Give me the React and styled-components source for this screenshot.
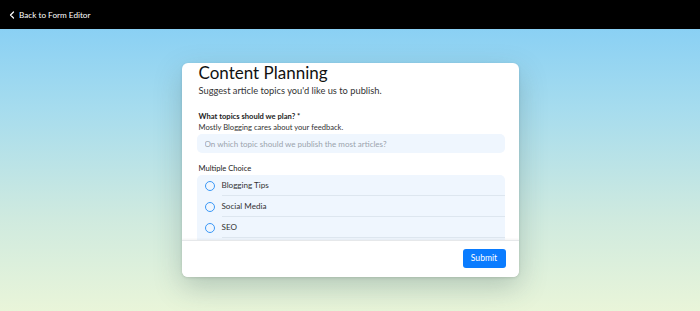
import React from 'react';
import styled, { createGlobalStyle } from 'styled-components';

const GlobalStyle = createGlobalStyle`
  html, body {
    margin: 0;
    padding: 0;
  }
  body {
    font-family: Lato, "Liberation Sans", sans-serif;
    color: #1f2328;
  }
  * { box-sizing: border-box; }
`;

const Page = styled.div`
  width: 100%;
  min-height: 311px;
  display: flex;
  flex-direction: column;
  background: linear-gradient(180deg, #80ccf6 0%, #a6dcee 35%, #cfeadf 70%, #e9f5d9 100%);
`;

const TopBar = styled.header`
  height: 29px;
  background: #000;
  display: flex;
  align-items: center;
  padding-left: 8px;
  gap: 3px;
  color: #fff;
  font-size: 8.2px;
`;

const Main = styled.main`
  flex: 1;
  display: flex;
  justify-content: center;
  padding-top: 34px;
  padding-bottom: 34px;
`;

const Card = styled.section`
  width: 337px;
  height: 214px;
  background: #fff;
  border-radius: 6px;
  box-shadow: 0 10px 28px rgba(60, 90, 90, 0.28), 0 1px 3px rgba(0, 0, 0, 0.12);
  display: flex;
  flex-direction: column;
  overflow: hidden;
`;

const Body = styled.div`
  flex: 1;
  overflow: hidden;
  padding: 0 14px 0 15px;
`;

const Title = styled.h1`
  margin: 0 0 0 2px;
  font-size: 17px;
  line-height: 20px;
  font-weight: 400;
  color: #111;
`;

const Subtitle = styled.p`
  margin: 1px 0 12.5px 2px;
  font-size: 9.3px;
  line-height: 14px;
  color: #333;
`;

const Label = styled.div`
  margin-left: 2px;
  font-size: 7.6px;
  line-height: 11px;
  font-weight: ${(p) => (p.$bold ? 700 : 400)};
  color: #222;
`;

const Help = styled.div`
  margin: 0 0 1.5px 2px;
  font-size: 7.6px;
  line-height: 11px;
  color: #333;
`;

const Input = styled.input`
  display: block;
  width: 100%;
  height: 19px;
  margin: 0 0 9.5px;
  border: none;
  border-radius: 5px;
  background: #eff6fe;
  padding: 0 8px;
  font-family: inherit;
  font-size: 8px;
  color: #333;
  outline: none;

  &::placeholder {
    color: #9aa3ad;
  }
`;

const Options = styled.div`
  margin-top: 1.5px;
  padding-bottom: 10px;
  background: #eff6fe;
  border-radius: 5px;
`;

const Option = styled.label`
  height: 21px;
  display: flex;
  align-items: center;
  padding-left: 8px;
  gap: 7px;
  cursor: pointer;
`;

const Radio = styled.span`
  width: 10px;
  height: 10px;
  border-radius: 50%;
  border: 1.2px solid #3a98f7;
  flex-shrink: 0;
`;

const OptionText = styled.span`
  flex: 1;
  height: 100%;
  display: flex;
  align-items: center;
  font-size: 8.1px;
  color: #333;
  border-bottom: 1px solid #dde6ef;
`;

const Footer = styled.footer`
  height: 37px;
  display: flex;
  align-items: center;
  justify-content: flex-end;
  padding: 0 13px 2px 0;
  border-top: 1px solid #e6e8ea;
  box-shadow: 0 -1px 2px rgba(0, 0, 0, 0.05);
  position: relative;
  background: #fff;
`;

const SubmitButton = styled.button`
  width: 43px;
  height: 19px;
  border: none;
  border-radius: 3px;
  background: #0a7cff;
  color: #fff;
  font-family: inherit;
  font-size: 8.6px;
  cursor: pointer;
`;

const choices = ['Blogging Tips', 'Social Media', 'SEO'];

export default function App() {
  return (
    <>
      <GlobalStyle />
      <Page>
        <TopBar>
          <svg width="8" height="8" viewBox="0 0 8 8" fill="none">
            <path d="M5.5 1L2.5 4l3 3" stroke="#fff" strokeWidth="1.2" strokeLinecap="round" strokeLinejoin="round" />
          </svg>
          <span>Back to Form Editor</span>
        </TopBar>
        <Main>
          <Card>
            <Body>
              <Title>Content Planning</Title>
              <Subtitle>Suggest article topics you'd like us to publish.</Subtitle>
              <Label $bold>What topics should we plan? *</Label>
              <Help>Mostly Blogging cares about your feedback.</Help>
              <Input placeholder="On which topic should we publish the most articles?" />
              <Label>Multiple Choice</Label>
              <Options>
                {choices.map((c) => (
                  <Option key={c}>
                    <Radio />
                    <OptionText>{c}</OptionText>
                  </Option>
                ))}
              </Options>
            </Body>
            <Footer>
              <SubmitButton>Submit</SubmitButton>
            </Footer>
          </Card>
        </Main>
      </Page>
    </>
  );
}
